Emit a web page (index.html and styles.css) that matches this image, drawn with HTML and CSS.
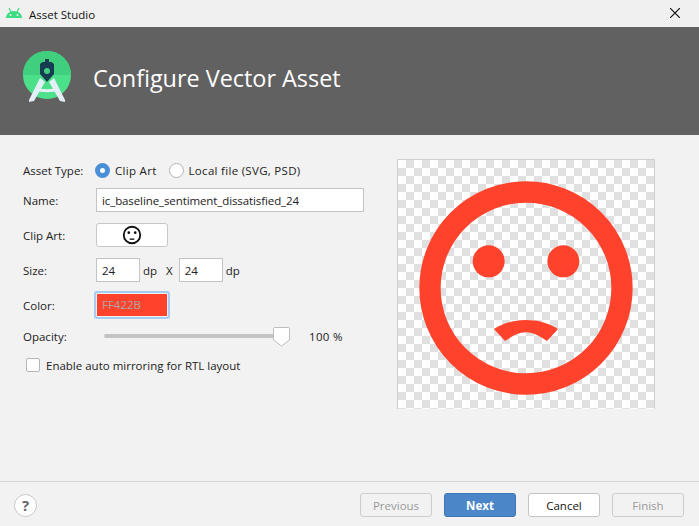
FILE: index.html
```html
<!DOCTYPE html>
<html lang="en">
<head>
    <meta charset="UTF-8">
    <title>Asset Studio</title>
    <link rel="stylesheet" href="styles.css">
</head>
<body>
<div class="titlebar">
    <svg class="titlebar-icon" width="18" height="12" viewBox="0 0 18 12">
        <path d="M1 11C1 7 4.500 4 9 4s8 3 8 7z" fill="#3ddc84"/>
        <path d="M4 1l2 4M14 1l-2 4" stroke="#3ddc84" stroke-width="1.200"/>
        <circle cx="5.500" cy="8" r="1" fill="#f0f0f0"/>
        <circle cx="12.500" cy="8" r="1" fill="#f0f0f0"/>
    </svg>
    <span class="titlebar-text">Asset Studio</span>
    <svg class="titlebar-close" width="10" height="10" viewBox="0 0 10 10">
        <path d="M0 0l10 10M10 0L0 10" stroke="#111" stroke-width="1.200"/>
    </svg>
</div>

<div class="banner">
    <svg class="banner-logo" width="50" height="56" viewBox="0 0 50 56">
        <circle cx="24" cy="24" r="24" fill="#4de08a"/>
        <path d="M0 24a24 24 0 0 1 48 0z" fill="#3fcf7e"/>
        <path d="M17 27L6 49v2l5-1 11-19zM31 27l11 22v2l-5-1-11-19z" fill="#e3eef6"/>
        <path d="M13 36c6 3 16 3 22 0l1.500 3c-7 3-18 3-25 0z" fill="#e3eef6"/>
        <path d="M22 8h4v3h2.500L31 13v10l-7 8-7-8V13l2.500-2H22z" fill="#153c50"/>
        <circle cx="24" cy="20" r="3" fill="#3fcf7e"/>
    </svg>
    <h1>Configure Vector Asset</h1>
</div>

<div class="content">
    <form class="form">
        <div class="row row-type">
            <span class="label">Asset Type:</span>
            <span class="radio radio-on"></span>
            <span class="radio-text radio-text-first">Clip Art</span>
            <span class="radio"></span>
            <span class="radio-text">Local file (SVG, PSD)</span>
        </div>
        <div class="row row-name">
            <label class="label" for="name">Name:</label>
            <input class="field field-name" id="name" type="text" value="ic_baseline_sentiment_dissatisfied_24">
        </div>
        <div class="row">
            <span class="label">Clip Art:</span>
            <button class="clip-btn" type="button">
                <svg width="22" height="22" viewBox="0 0 24 24">
                    <circle cx="12" cy="12" r="9" fill="none" stroke="#111" stroke-width="2"/>
                    <circle cx="8.500" cy="9.500" r="1.500" fill="#111"/>
                    <circle cx="15.500" cy="9.500" r="1.500" fill="#111"/>
                    <path d="M9.500 16.500h5" stroke="#111" stroke-width="1.500"/>
                </svg>
            </button>
        </div>
        <div class="row">
            <span class="label">Size:</span>
            <input class="field field-size" type="text" value="24">
            <span class="unit">dp</span>
            <span class="unit-x">X</span>
            <input class="field field-size" type="text" value="24">
            <span class="unit">dp</span>
        </div>
        <div class="row row-color">
            <span class="label">Color:</span>
            <div class="swatch">FF422B</div>
        </div>
        <div class="row row-opacity">
            <span class="label">Opacity:</span>
            <div class="slider">
                <svg class="slider-thumb" width="17" height="20" viewBox="0 0 17 20">
                    <path d="M1.500 .5h14a1 1 0 0 1 1 1V13l-8 6-8-6V1.500a1 1 0 0 1 1-1z" fill="#fff" stroke="#bdbdbd"/>
                </svg>
            </div>
            <span class="slider-value">100 %</span>
        </div>
        <div class="row row-check">
            <span class="checkbox"></span>
            <span>Enable auto mirroring for RTL layout</span>
        </div>
    </form>

    <div class="preview">
        <svg width="256" height="256" viewBox="0 0 24 24">
            <circle cx="12" cy="12" r="9" fill="none" stroke="#ff422b" stroke-width="2"/>
            <circle cx="8.500" cy="9.500" r="1.500" fill="#ff422b"/>
            <circle cx="15.500" cy="9.500" r="1.500" fill="#ff422b"/>
            <path d="M12 15c-1.150 0-2.200.32-3 .84l1.030 1.130c.55-.37 1.230-.82 1.970-.82s1.420.45 1.970.82l1.030-1.130c-.8-.52-1.850-.84-3-.84z" fill="#ff422b"/>
        </svg>
    </div>
</div>

<div class="footer">
    <span class="help">?</span>
    <div class="footer-buttons">
        <button class="btn" type="button" disabled>Previous</button>
        <button class="btn btn-primary" type="button">Next</button>
        <button class="btn btn-white" type="button">Cancel</button>
        <button class="btn" type="button" disabled>Finish</button>
    </div>
</div>
</body>
</html>
```

FILE: styles.css
```css
html, body {
    margin: 0;
    height: 526px;
    overflow: hidden;
}

body {
    display: flex;
    flex-direction: column;
    background: #f2f2f2;
    color: #222;
    font-family: 'Open Sans', sans-serif;
    font-size: 11.5px;
}

.titlebar {
    display: flex;
    align-items: center;
    height: 27px;
    padding: 2px 19px 0 5px;
    box-sizing: border-box;
    background: #f0f0f0;
    color: #111;
}

.titlebar-icon {
    margin: -4px 6px 0 0;
}

.titlebar-text {
    flex: 1;
}

.titlebar-close {
    margin-top: -3px;
}

.banner {
    display: flex;
    align-items: flex-start;
    height: 108px;
    padding: 24px 0 0 23px;
    box-sizing: border-box;
    background: #616161;
}

.banner-logo {
    flex-shrink: 0;
}

.banner h1 {
    margin: 9px 0 0 20px;
    font-size: 23.4px;
    font-weight: 400;
    line-height: 36px;
    color: #fff;
}

.content {
    display: flex;
    flex: 1;
}

.form {
    width: 374px;
    padding: 23px 0 0 23px;
    box-sizing: border-box;
}

.row {
    display: flex;
    align-items: center;
    height: 24px;
    margin-top: 11px;
}

.row-type {
    margin-top: 0;
}

.row-name {
    margin-top: 6px;
}

.row-color {
    height: 26px;
    margin-top: 10px;
}

.row-opacity {
    height: 20px;
    margin-top: 8px;
}

.row-check {
    margin-top: 7px;
    padding-left: 3px;
}

.label {
    flex-shrink: 0;
    width: 73px;
}

.radio {
    width: 13px;
    height: 13px;
    margin-right: 5px;
    border: 1px solid #b5b5b5;
    border-radius: 50%;
    background: #fff;
}

.radio-on {
    width: 5px;
    height: 5px;
    margin-left: -1px;
    border: 5px solid #4a90d9;
}

.radio-text {
    letter-spacing: .3px;
}

.radio-text-first {
    margin-right: 12px;
}

.field {
    height: 24px;
    padding: 0 5px;
    box-sizing: border-box;
    border: 1px solid #c4c4c4;
    border-radius: 0;
    outline: none;
    background: #fff;
    color: #222;
    font: inherit;
}

.field-name {
    width: 268px;
    letter-spacing: -.1px;
}

.field-size {
    width: 44px;
}

.unit {
    margin-left: 3px;
}

.unit-x {
    margin: 0 6px 0 9px;
}

.clip-btn {
    display: flex;
    align-items: center;
    justify-content: center;
    width: 72px;
    height: 24px;
    padding: 0;
    border: 1px solid #c8c8c8;
    border-radius: 3px;
    background: #fff;
}

.swatch {
    width: 72px;
    height: 24px;
    padding-left: 5px;
    box-sizing: border-box;
    border: 1px solid #f2f2f2;
    border-radius: 1px;
    outline: 2px solid #a6ccf2;
    background: #ff422b;
    color: #a8a8a8;
    line-height: 22px;
}

.slider {
    position: relative;
    width: 175px;
    height: 4px;
    margin-left: 8px;
    background: #c4c4c4;
    border-radius: 2px;
}

.slider-thumb {
    position: absolute;
    top: -7px;
    right: -11px;
}

.slider-value {
    margin-left: 30px;
    letter-spacing: .3px;
}

.checkbox {
    width: 12px;
    height: 12px;
    margin-right: 6px;
    border: 1px solid #b5b5b5;
    border-radius: 2px;
    background: #fff;
}

.preview {
    display: flex;
    justify-content: center;
    align-items: flex-start;
    width: 258px;
    height: 250px;
    margin: 24px 0 0 23px;
    box-sizing: border-box;
    overflow: hidden;
    border: 1px solid #cfcfcf;
    border-bottom: none;
    background-color: #fff;
    background-image: conic-gradient(#e0e0e0 25%, #fff 0 50%, #e0e0e0 0 75%, #fff 0);
    background-size: 16px 16px;
}

.preview svg {
    flex-shrink: 0;
}

.footer {
    display: flex;
    align-items: center;
    justify-content: space-between;
    height: 42px;
    padding: 2px 15px 0 14px;
    border-top: 1px solid #d4d4d4;
}

.help {
    width: 21px;
    height: 21px;
    border: 1px solid #c8c8c8;
    border-radius: 50%;
    background: #fff;
    color: #666;
    font-size: 15px;
    font-weight: 700;
    line-height: 21px;
    text-align: center;
}

.footer-buttons {
    display: flex;
    gap: 12px;
}

.btn {
    width: 72px;
    height: 24px;
    padding: 0;
    border: 1px solid #cdcdcd;
    border-radius: 3px;
    background: #f2f2f2;
    color: #9a9a9a;
    font: inherit;
}

.btn-primary {
    border-color: #3f78b5;
    background: #4a86c8;
    color: #fff;
    font-weight: 700;
}

.btn-white {
    border-color: #c4c4c4;
    background: #fff;
    color: #111;
}
```
